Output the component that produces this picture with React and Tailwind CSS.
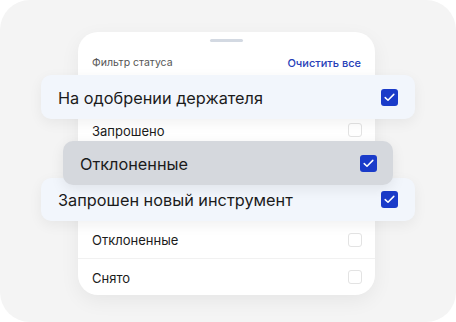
import React from "react";

function Check({ checked }) {
  if (!checked) {
    return (
      <div className="w-[14px] h-[14px] rounded-[3px] border border-[#e3e3e3] bg-white shrink-0" />
    );
  }
  return (
    <div className="w-[17px] h-[17px] rounded-[3px] bg-[#1a3bc9] flex items-center justify-center shrink-0">
      <svg width="11" height="9" viewBox="0 0 11 9" fill="none">
        <path d="M1.2 4.6 L4 7.2 L9.8 1.4" stroke="white" strokeWidth="1.5" strokeLinecap="round" strokeLinejoin="round" />
      </svg>
    </div>
  );
}

export default function App() {
  return (
    <div className="w-[456px] h-[322px] bg-white" style={{ fontFamily: "Inter, 'Noto Sans', sans-serif" }}>
      <div className="w-full h-full rounded-[30px] bg-[#f4f4f4] pt-[32px] pl-[78px]">
        <div className="w-[297px] h-[263px] bg-white rounded-[20px] shadow-[0_6px_20px_rgba(0,0,0,0.06)] flex flex-col">
          <div className="h-[10px] pt-[7px] flex justify-center">
            <div className="w-[33px] h-[3px] rounded-full bg-[#d3d9e2]" />
          </div>
          <div className="h-[33px] flex items-end justify-between px-[14px] pb-[5px]">
            <span className="text-[10.5px] leading-[14px] text-[#555]">Фильтр статуса</span>
            <span className="text-[11px] leading-[14px] font-medium text-[#2640b8]">Очистить все</span>
          </div>
          <div className="relative z-10 ml-[-37px] mr-[-40px] h-[44px] rounded-[10px] bg-[#f2f6fc] shadow-[0_4px_14px_rgba(0,0,0,0.06)] flex items-center justify-between pl-[17px] pr-[17px]">
            <span className="text-[16.3px] text-[#1b1b1b] pt-[2px]">На одобрении держателя</span>
            <Check checked />
          </div>
          <div className="h-[22px] flex items-center justify-between pl-[14px] pr-[13px]">
            <span className="text-[13px] text-[#1b1b1b] pt-[3px]">Запрошено</span>
            <Check checked={false} />
          </div>
          <div className="relative z-20 ml-[-15px] mr-[-18px] h-[44px] rounded-[10px] bg-[#d5d8dd] shadow-[0_4px_14px_rgba(0,0,0,0.08)] flex items-center justify-between pl-[17px] pr-[16px]">
            <span className="text-[16.3px] text-[#1b1b1b] pt-[3px]">Отклоненные</span>
            <Check checked />
          </div>
          <div className="relative z-10 mt-[-7px] ml-[-37px] mr-[-40px] h-[43px] rounded-[10px] bg-[#f2f6fc] shadow-[0_4px_14px_rgba(0,0,0,0.06)] flex items-center justify-between pl-[17px] pr-[17px]">
            <span className="text-[16.3px] text-[#1b1b1b] pt-[2px]">Запрошен новый инструмент</span>
            <Check checked />
          </div>
          <div className="h-[37px] flex items-center justify-between pl-[14px] pr-[13px]">
            <span className="text-[13px] text-[#1b1b1b] pt-[3px]">Отклоненные</span>
            <Check checked={false} />
          </div>
          <div className="h-px bg-[#f1f1f1]" />
          <div className="h-[36px] flex items-center justify-between pl-[14px] pr-[13px]">
            <span className="text-[13px] text-[#1b1b1b] pt-[3px]">Снято</span>
            <Check checked={false} />
          </div>
        </div>
      </div>
    </div>
  );
}
